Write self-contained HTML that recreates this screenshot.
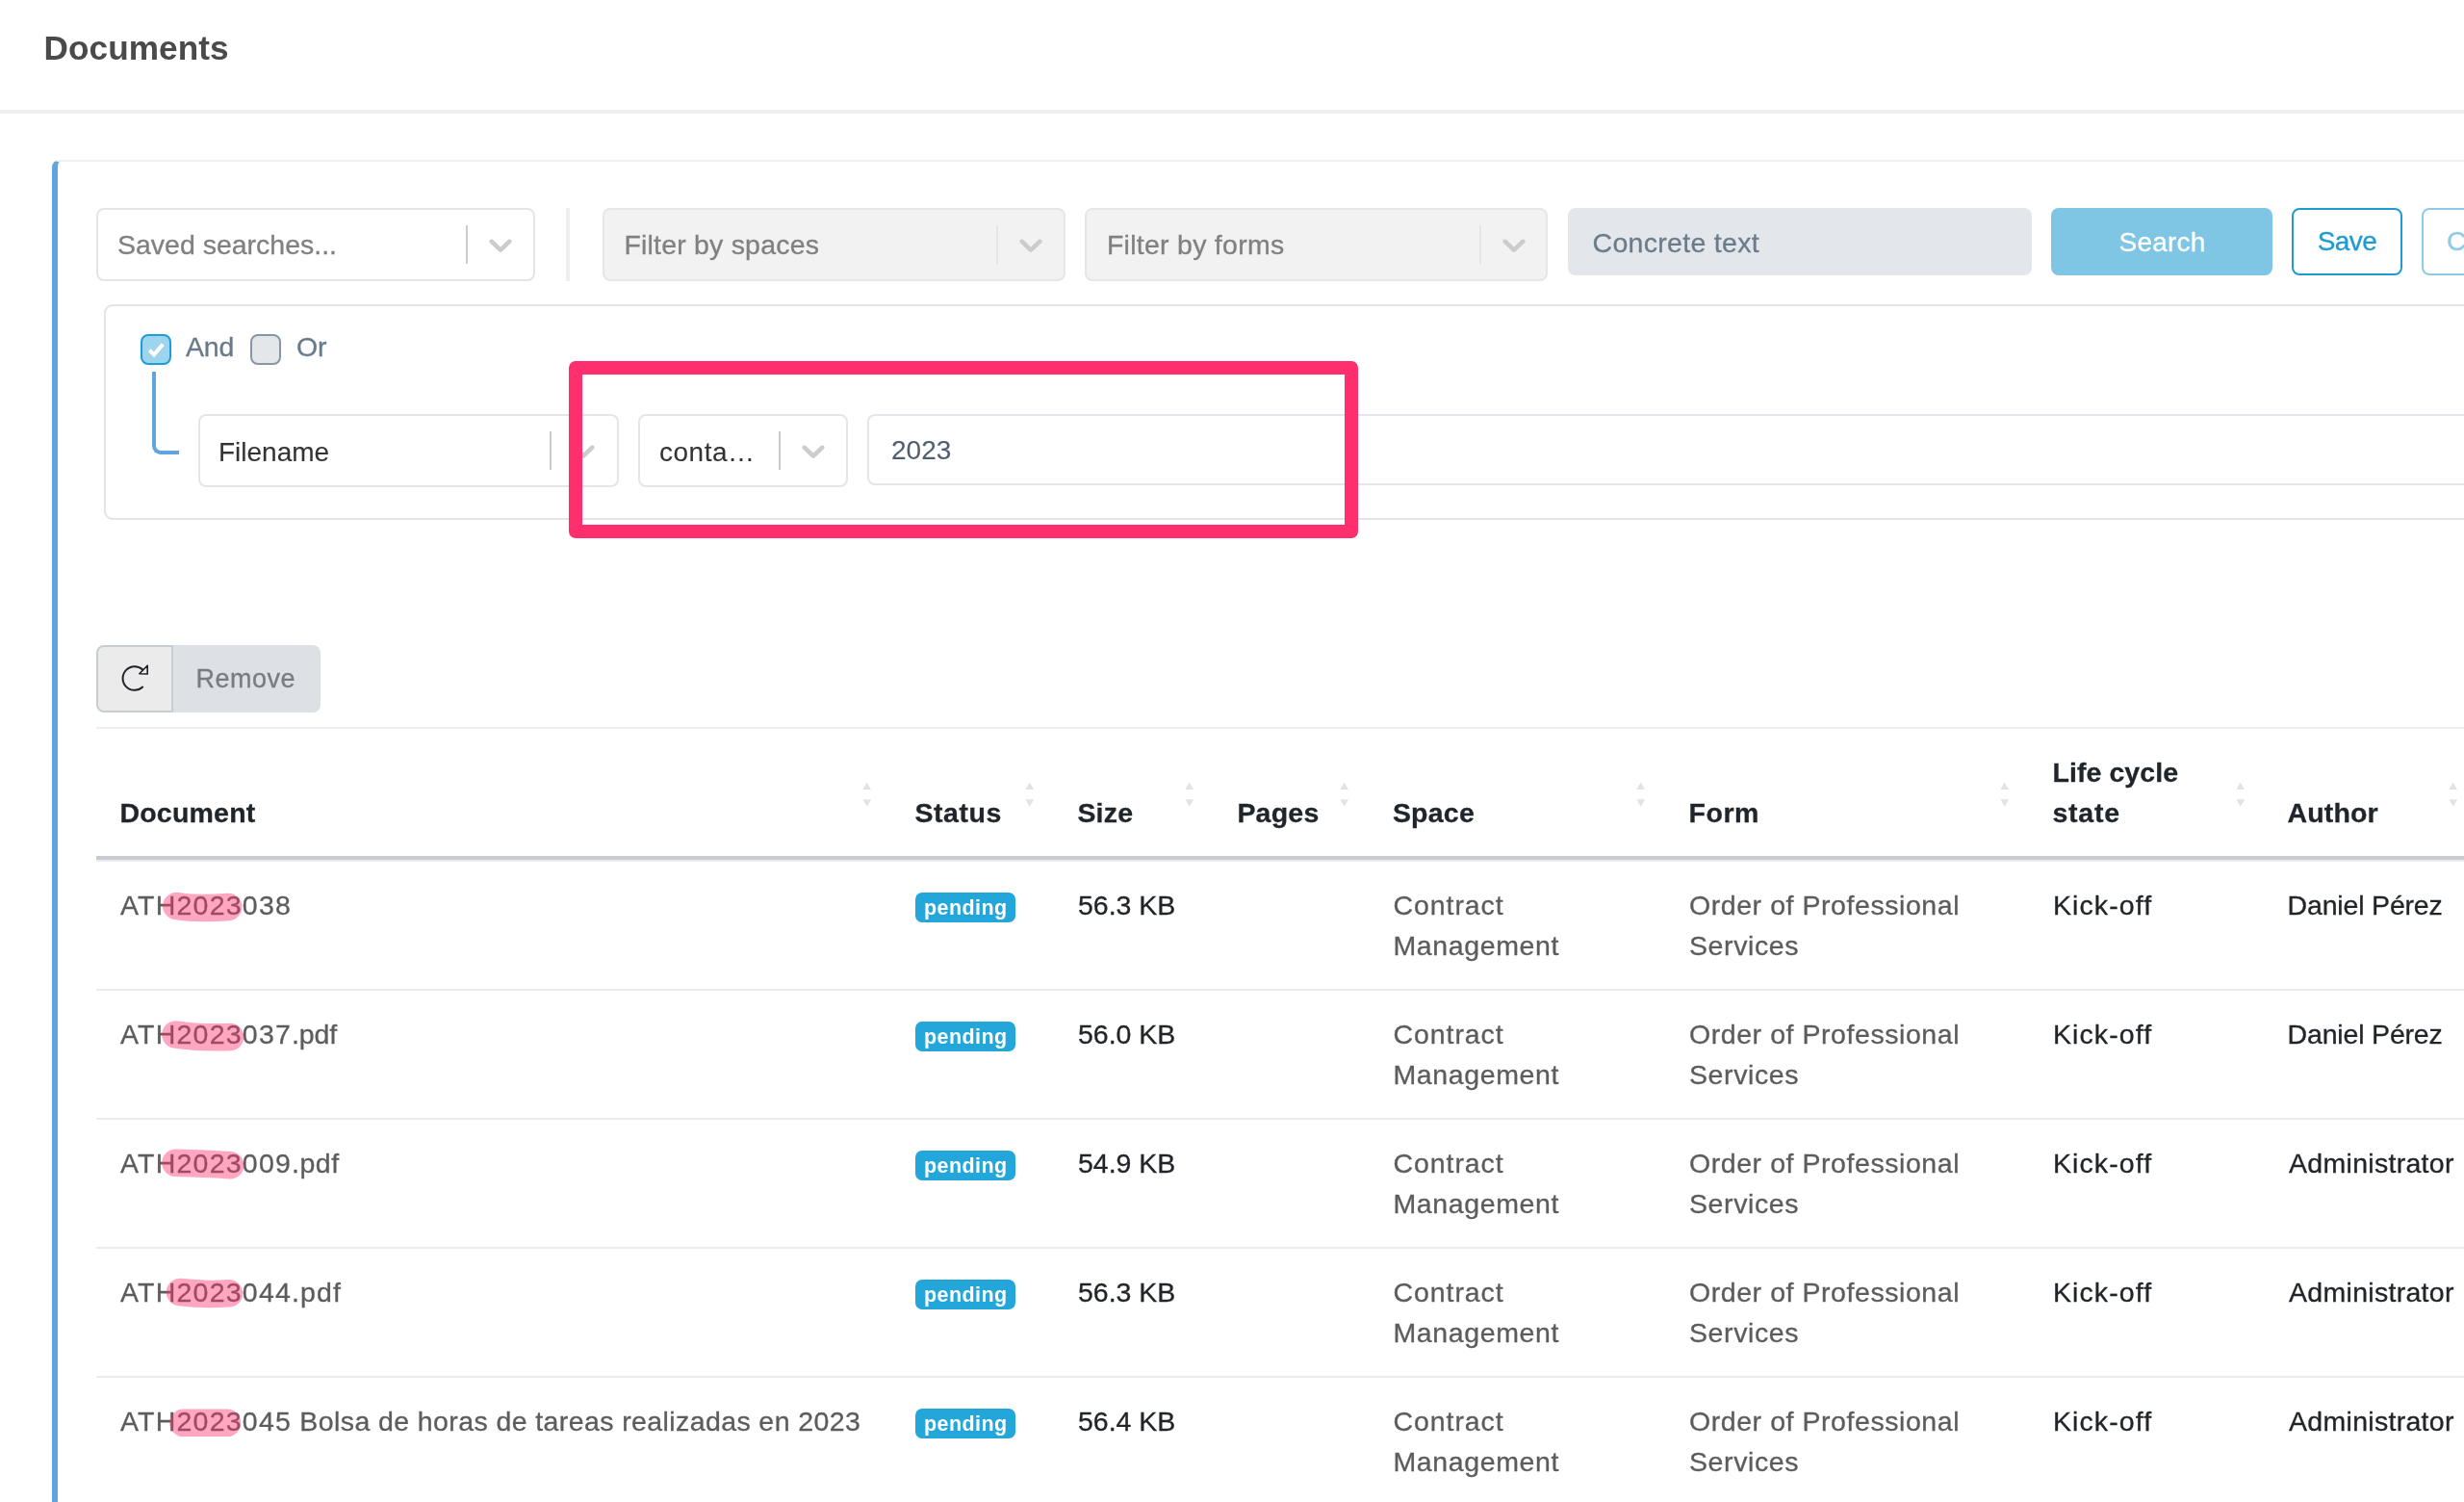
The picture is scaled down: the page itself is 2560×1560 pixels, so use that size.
<!DOCTYPE html>
<html lang="en">
<head>
<meta charset="utf-8">
<title>Documents</title>
<style>
*{box-sizing:border-box;margin:0;padding:0}
html,body{width:2560px;height:1560px;overflow:hidden;background:#fff}
body{position:relative;font-family:"Liberation Sans",sans-serif;font-size:28.5px;color:#212529;-webkit-font-smoothing:antialiased;-webkit-text-stroke:.3px currentColor}
.abs{position:absolute}
/* header */
.pagehead{position:absolute;left:0;top:0;width:2560px;height:118px;border-bottom:4px solid #eeeeee;background:#fff}
.pagehead h1{position:absolute;left:45.6px;top:28.4px;font-size:35.2px;line-height:44px;font-weight:700;color:#4a4a4a;letter-spacing:.05px;-webkit-text-stroke:0;white-space:nowrap}
/* card */
.card{position:absolute;left:54px;top:166px;width:2560px;height:1500px;border-left:6px solid #61a5e0;border-top:2px solid #f0f0f0;border-radius:8px 0 0 0;background:#fff}
/* selects */
.sel{position:absolute;height:76px;border:2px solid #e3e5e9;border-radius:8px;background:#fff;white-space:nowrap}
.sel.dis{background:#f2f2f2;border-color:#e6e6e8}
.sel .ph{position:absolute;left:20px;top:15px;line-height:42px;font-size:28.5px;color:#808080;letter-spacing:.3px}
.sel .val{-webkit-text-stroke:.1px currentColor;position:absolute;left:19px;top:17px;line-height:42px;font-size:28px;color:#333;font-family:"Liberation Sans",sans-serif}
.sel .sep{position:absolute;top:16px;width:2px;height:40px;background:#cccccc}
.sel.dis .sep{background:#e5e5e5}
.sel svg.chev{position:absolute;top:16px;width:40px;height:40px;fill:#cccccc}
.vdiv{position:absolute;left:588px;top:216px;width:4px;height:76px;background:#efefef}
.txtin{position:absolute;border-radius:8px;white-space:nowrap}
.btn{position:absolute;display:block;height:70px;border:0;margin:0;padding:0;border-radius:8px;text-align:center;line-height:66px;font-size:28px;font-family:inherit;white-space:nowrap;-webkit-text-stroke:.3px currentColor;cursor:pointer}

/* query builder */
.qb{position:absolute;left:108px;top:316px;width:2600px;height:224px;border:2px solid #e2e4e7;border-radius:9px;background:#fff}
.cb{position:absolute;top:347px;width:32px;height:32px;border-radius:8px;border:2px solid #8796a4;background:#e3e7ea}
.cb.on{border-color:#1a9fd6;background:#9dd4ee}
.cb svg{position:absolute;left:-2px;top:-2px;width:32px;height:32px}
.cblab{position:absolute;top:339px;line-height:42px;font-size:28.5px;letter-spacing:-.2px;color:#687a8b;white-space:nowrap}
.conn{position:absolute;left:158px;top:386px;width:28px;height:86px;border-left:4px solid #61a5e0;border-bottom:4px solid #61a5e0;border-radius:0 0 0 9px}
.valin{position:absolute;left:901px;top:430px;width:1800px;height:74px;border:2px solid #e2e5e9;border-radius:8px;background:#fff}
.valin span{-webkit-text-stroke:.1px currentColor;position:absolute;left:23px;top:15px;line-height:42px;font-size:28px;color:#4f5f70;white-space:nowrap}
.annot{position:absolute;left:591px;top:375px;width:820px;height:184px;border:14px solid #ff2e6c;border-radius:7px}
/* button group */
.bg1{display:block;margin:0;padding:0;font-family:inherit;position:absolute;left:100px;top:670px;width:80px;height:70px;border:2px solid #c6cdd3;border-radius:8px 0 0 8px;background:#ebebeb}
.bg2{display:block;margin:0;padding:0;border:0;font-family:inherit;-webkit-text-stroke:.3px currentColor;position:absolute;left:180px;top:670px;width:153px;height:70px;border-radius:0 8px 8px 0;background:#dde0e4;color:#777c80;font-size:27px;line-height:71px;white-space:nowrap;letter-spacing:.5px}
.bg2 span{position:absolute;left:23.5px;top:0}

/* table */
table.docs{position:absolute;left:100px;top:755px;border-collapse:separate;border-spacing:0;table-layout:fixed;width:2474px;border-top:2px solid #eeeeee}
table.docs th,table.docs td{padding:24px 25px;line-height:42px;font-size:28.5px;text-align:left;vertical-align:top;overflow:visible;white-space:nowrap;position:relative}
table.docs th{vertical-align:bottom;font-weight:700;color:#1f252b;border-bottom:4px solid #c6ccd2;font-size:28.5px;letter-spacing:.22px;padding-left:24.4px}
table.docs td{border-top:2px solid #ececee;height:134px;color:#212529;letter-spacing:.3px}
table.docs tbody tr:first-child td{border-top:2px solid #ececee}
table.docs td.m{color:#5c5c5c}
table.docs th .so{position:absolute;right:21px;bottom:50.5px;width:9.4px;height:26.4px}
.badge{display:inline-block;position:relative;top:0;height:31px;line-height:32.6px;padding:0 8.8px 0 9px;-webkit-text-stroke:0;border-radius:7px;background:#23a6d9;color:#fff;font-weight:700;font-size:21.5px;letter-spacing:.42px;vertical-align:middle}

table.docs td:nth-child(3){letter-spacing:-.03px}

table.docs td:nth-child(7){letter-spacing:1.08px}
table.docs td.dp{letter-spacing:-.18px;padding-left:23.6px}
table.docs th:nth-child(8){padding-left:23.6px}
table.docs td.ad{letter-spacing:.3px}
table.docs th:nth-child(2){letter-spacing:.58px}
table.docs th:nth-child(6){letter-spacing:.6px}
table.docs th:nth-child(7){letter-spacing:.08px}
table.docs th:nth-child(8){letter-spacing:.1px}
table.docs td .dn{letter-spacing:1.22px}
svg.hl{position:absolute;left:0;top:0;width:2560px;height:1560px;pointer-events:none}
</style>
</head>
<body>
<div id="root" style="position:absolute;left:0;top:0;width:2560px;height:1560px;will-change:transform">
<header class="pagehead"><h1>Documents</h1></header>
<main class="card"></main>

<!-- toolbar -->
<div class="sel" style="left:100px;top:216px;width:456px"><span class="ph" style="letter-spacing:-.01px">Saved searches...</span><i class="sep" style="left:382px"></i><svg class="chev" style="left:398px" viewBox="0 0 20 20"><path d="M4.516 7.548c0.436-0.446 1.043-0.481 1.576 0l3.908 3.747 3.908-3.747c0.533-0.481 1.141-0.446 1.574 0 0.436 0.445 0.408 1.197 0 1.615-0.406 0.418-4.695 4.502-4.695 4.502-0.217 0.223-0.502 0.335-0.787 0.335s-0.57-0.112-0.789-0.335c0 0-4.287-4.084-4.695-4.502s-0.436-1.170 0-1.615z"/></svg></div>
<i class="vdiv"></i>
<div class="sel dis" style="left:626px;top:216px;width:481px"><span class="ph" style="left:20.4px;letter-spacing:.2px">Filter by spaces</span><i class="sep" style="left:407px"></i><svg class="chev" style="left:423px" viewBox="0 0 20 20"><path d="M4.516 7.548c0.436-0.446 1.043-0.481 1.576 0l3.908 3.747 3.908-3.747c0.533-0.481 1.141-0.446 1.574 0 0.436 0.445 0.408 1.197 0 1.615-0.406 0.418-4.695 4.502-4.695 4.502-0.217 0.223-0.502 0.335-0.787 0.335s-0.57-0.112-0.789-0.335c0 0-4.287-4.084-4.695-4.502s-0.436-1.170 0-1.615z"/></svg></div>
<div class="sel dis" style="left:1127px;top:216px;width:481px"><span class="ph" style="left:20.9px;letter-spacing:.27px">Filter by forms</span><i class="sep" style="left:408px"></i><svg class="chev" style="left:424px" viewBox="0 0 20 20"><path d="M4.516 7.548c0.436-0.446 1.043-0.481 1.576 0l3.908 3.747 3.908-3.747c0.533-0.481 1.141-0.446 1.574 0 0.436 0.445 0.408 1.197 0 1.615-0.406 0.418-4.695 4.502-4.695 4.502-0.217 0.223-0.502 0.335-0.787 0.335s-0.57-0.112-0.789-0.335c0 0-4.287-4.084-4.695-4.502s-0.436-1.170 0-1.615z"/></svg></div>
<div class="txtin" style="left:1629px;top:216px;width:482px;height:70px;background:#e3e7eb"><span class="abs" style="left:25.5px;top:14.5px;line-height:42px;color:#6c7b8a;letter-spacing:.3px">Concrete text</span></div>
<button type="button" class="btn" style="left:2131px;top:216px;width:230px;background:#7fc5e4;color:#fff;padding:2px 0 0 1px;letter-spacing:.2px">Search</button>
<button type="button" class="btn" style="left:2381px;top:216px;width:115px;border:2px solid #1f9bcf;color:#1f9bcf;background:#fff;letter-spacing:-.6px">Save</button>
<button type="button" class="btn" style="left:2516px;top:216px;width:150px;border:2px solid #8fcbe6;color:#8fcbe6;background:#fff;text-align:left;padding-left:24px">Clear</button>

<!-- query builder -->
<section class="qb"></section>
<span class="cb on" style="left:146px"><svg viewBox="0 0 32 32"><path d="M9.3 16.6 L14 21.3 L23.2 10.6" fill="none" stroke="#fff" stroke-width="4"/></svg></span><label class="cblab" style="left:193px">And</label>
<span class="cb" style="left:260px"></span><label class="cblab" style="left:308px">Or</label>
<i class="conn"></i>
<div class="sel" style="left:206px;top:430px;width:437px;height:76px"><span class="val">Filename</span><i class="sep" style="left:363px;top:16px"></i><svg class="chev" style="left:378px" viewBox="0 0 20 20"><path d="M4.516 7.548c0.436-0.446 1.043-0.481 1.576 0l3.908 3.747 3.908-3.747c0.533-0.481 1.141-0.446 1.574 0 0.436 0.445 0.408 1.197 0 1.615-0.406 0.418-4.695 4.502-4.695 4.502-0.217 0.223-0.502 0.335-0.787 0.335s-0.57-0.112-0.789-0.335c0 0-4.287-4.084-4.695-4.502s-0.436-1.170 0-1.615z"/></svg></div>
<div class="sel" style="left:663px;top:430px;width:218px;height:76px"><span class="val" style="left:20px;letter-spacing:.5px">conta…</span><i class="sep" style="left:144px;top:16px"></i><svg class="chev" style="left:160px" viewBox="0 0 20 20"><path d="M4.516 7.548c0.436-0.446 1.043-0.481 1.576 0l3.908 3.747 3.908-3.747c0.533-0.481 1.141-0.446 1.574 0 0.436 0.445 0.408 1.197 0 1.615-0.406 0.418-4.695 4.502-4.695 4.502-0.217 0.223-0.502 0.335-0.787 0.335s-0.57-0.112-0.789-0.335c0 0-4.287-4.084-4.695-4.502s-0.436-1.170 0-1.615z"/></svg></div>
<div class="valin"><span>2023</span></div>
<div class="annot"></div>

<!-- buttons -->
<button type="button" class="bg1"><svg class="abs" style="left:-2px;top:-2px" width="80" height="70" viewBox="100 670 80 70"><path d="M148.3 695.6 A12.3 12.3 0 1 0 148.2 713.6" fill="none" stroke="#1f2327" stroke-width="2" stroke-linecap="round"/><path d="M153.2 691.2 L153.2 700 L144.8 699.7 Z" fill="none" stroke="#1f2327" stroke-width="1.6" stroke-linejoin="round"/></svg></button>
<button type="button" class="bg2"><span>Remove</span></button>

<!-- table -->
<table class="docs"><colgroup><col style="width:826px"><col style="width:169px"><col style="width:166px"><col style="width:161.5px"><col style="width:307.5px"><col style="width:378px"><col style="width:245px"><col style="width:221px"></colgroup>
<thead><tr><th>Document<svg class="so" viewBox="0 0 10 27"><path d="M5 0 L9.6 8 L0.4 8 Z M5 27 L9.6 19 L0.4 19 Z" fill="#e3e3e3"/></svg></th><th>Status<svg class="so" viewBox="0 0 10 27"><path d="M5 0 L9.6 8 L0.4 8 Z M5 27 L9.6 19 L0.4 19 Z" fill="#e3e3e3"/></svg></th><th>Size<svg class="so" viewBox="0 0 10 27"><path d="M5 0 L9.6 8 L0.4 8 Z M5 27 L9.6 19 L0.4 19 Z" fill="#e3e3e3"/></svg></th><th>Pages<svg class="so" viewBox="0 0 10 27"><path d="M5 0 L9.6 8 L0.4 8 Z M5 27 L9.6 19 L0.4 19 Z" fill="#e3e3e3"/></svg></th><th>Space<svg class="so" viewBox="0 0 10 27"><path d="M5 0 L9.6 8 L0.4 8 Z M5 27 L9.6 19 L0.4 19 Z" fill="#e3e3e3"/></svg></th><th>Form<svg class="so" viewBox="0 0 10 27"><path d="M5 0 L9.6 8 L0.4 8 Z M5 27 L9.6 19 L0.4 19 Z" fill="#e3e3e3"/></svg></th><th>Life cycle<br><span style="letter-spacing:.8px">state</span><svg class="so" viewBox="0 0 10 27"><path d="M5 0 L9.6 8 L0.4 8 Z M5 27 L9.6 19 L0.4 19 Z" fill="#e3e3e3"/></svg></th><th>Author<svg class="so" viewBox="0 0 10 27"><path d="M5 0 L9.6 8 L0.4 8 Z M5 27 L9.6 19 L0.4 19 Z" fill="#e3e3e3"/></svg></th></tr></thead>
<tbody>
<tr><td class="m"><span class="dn">ATH2023038</span></td><td><span class="badge">pending</span></td><td>56.3 KB</td><td></td><td class="m"><span style="letter-spacing:.92px">Contract</span><br><span style="letter-spacing:.62px">Management</span></td><td class="m"><span style="letter-spacing:.56px">Order of Professional</span><br><span style="letter-spacing:.6px">Services</span></td><td>Kick-off</td><td class="dp">Daniel Pérez</td></tr>
<tr><td class="m"><span class="dn">ATH2023037</span><span style="letter-spacing:-.18px">.pdf</span></td><td><span class="badge">pending</span></td><td>56.0 KB</td><td></td><td class="m"><span style="letter-spacing:.92px">Contract</span><br><span style="letter-spacing:.62px">Management</span></td><td class="m"><span style="letter-spacing:.56px">Order of Professional</span><br><span style="letter-spacing:.6px">Services</span></td><td>Kick-off</td><td class="dp">Daniel Pérez</td></tr>
<tr><td class="m"><span class="dn">ATH2023009</span><span style="letter-spacing:.52px">.pdf</span></td><td><span class="badge">pending</span></td><td>54.9 KB</td><td></td><td class="m"><span style="letter-spacing:.92px">Contract</span><br><span style="letter-spacing:.62px">Management</span></td><td class="m"><span style="letter-spacing:.56px">Order of Professional</span><br><span style="letter-spacing:.6px">Services</span></td><td>Kick-off</td><td class="ad">Administrator</td></tr>
<tr><td class="m"><span class="dn">ATH2023044</span><span style="letter-spacing:1.08px">.pdf</span></td><td><span class="badge">pending</span></td><td>56.3 KB</td><td></td><td class="m"><span style="letter-spacing:.92px">Contract</span><br><span style="letter-spacing:.62px">Management</span></td><td class="m"><span style="letter-spacing:.56px">Order of Professional</span><br><span style="letter-spacing:.6px">Services</span></td><td>Kick-off</td><td class="ad">Administrator</td></tr>
<tr><td class="m"><span class="dn">ATH2023045</span><span style="letter-spacing:.4px"> Bolsa de horas de tareas realizadas en 2023</span></td><td><span class="badge">pending</span></td><td>56.4 KB</td><td></td><td class="m"><span style="letter-spacing:.92px">Contract</span><br><span style="letter-spacing:.62px">Management</span></td><td class="m"><span style="letter-spacing:.56px">Order of Professional</span><br><span style="letter-spacing:.6px">Services</span></td><td>Kick-off</td><td class="ad">Administrator</td></tr>
</tbody></table>
<svg class="hl" viewBox="0 0 2560 1560"><g fill="none" stroke="#ff3070" stroke-opacity=".43" stroke-width="28.5" stroke-linecap="round">
<path d="M183.3 941 Q205 944.5 237.2 942"/>
<path d="M182.5 1074.5 Q205 1078 239.1 1077"/>
<path d="M182.5 1207.8 Q215 1208.5 239.1 1210.2"/>
<path d="M187 1342 Q210 1345 238 1343.3"/>
<path d="M190.5 1477.8 L236 1477.8"/>
</g></svg>

</div>
</body>
</html>
